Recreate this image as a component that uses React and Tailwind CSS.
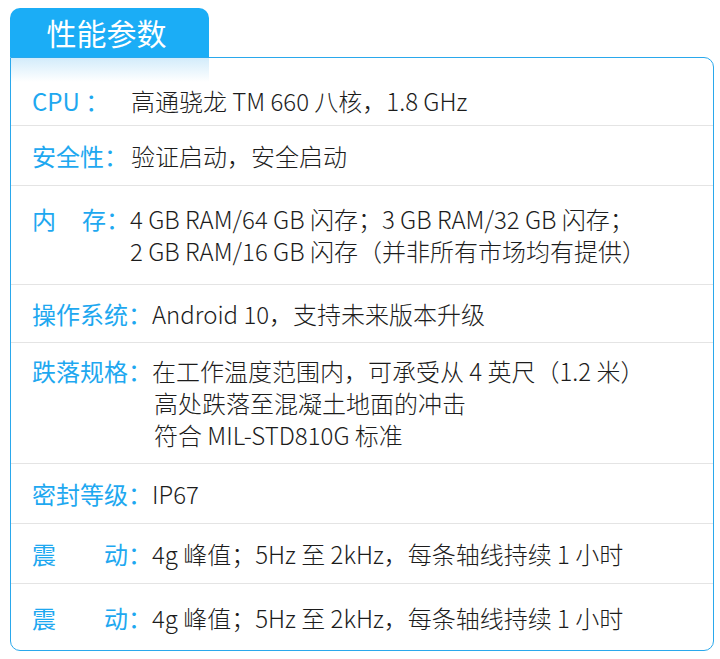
const rows = [
  { label: "CPU ：", labelW: "w-[99px]", h: "h-[68px] pt-[17px]", lines: ["高通骁龙 TM 660 八核，1.8 GHz"] },
  { label: "安全性：", labelW: "w-[99px]", h: "h-[60px]", lines: ["验证启动，安全启动"] },
  {
    split: ["内", "存："],
    labelW: "w-[98px]",
    h: "h-[99px]",
    lines: ["4 GB RAM/64 GB 闪存；3 GB RAM/32 GB 闪存；", "2 GB RAM/16 GB 闪存（并非所有市场均有提供）"],
    leading: "leading-[32px]",
  },
  { label: "操作系统：", labelW: "w-[120px]", h: "h-[58px]", lines: ["Android 10，支持未来版本升级"] },
  {
    label: "跌落规格：",
    labelW: "w-[120px]",
    h: "h-[121px]",
    lines: ["在工作温度范围内，可承受从 4 英尺（1.2 米）", "高处跌落至混凝土地面的冲击", "符合 MIL-STD810G 标准"],
    leading: "leading-[32px]",
    indent: true,
  },
  { label: "密封等级：", labelW: "w-[120px]", h: "h-[60px]", lines: ["IP67"] },
  { split: ["震", "动："], labelW: "w-[120px]", h: "h-[60px]", lines: ["4g 峰值；5Hz 至 2kHz，每条轴线持续 1 小时"] },
  { split: ["震", "动："], labelW: "w-[120px]", h: "h-[66px]", lines: ["4g 峰值；5Hz 至 2kHz，每条轴线持续 1 小时"], last: true },
];

const App = () => {
  return (
    <div
      className="min-h-screen bg-white pt-[8px] pl-[10px]"
      style={{ fontFamily: '"Noto Sans CJK SC", "Noto Sans", sans-serif' }}
    >
      <div className="w-[704px]">
        <div className="w-[199px] h-[49px] rounded-t-[10px] bg-[#1badf6] flex items-center justify-center text-white text-[30px] pr-[6px]">
          性能参数
        </div>

        <div className="relative border border-[#2aa8ec] rounded-tr-[10px] rounded-b-[10px] bg-white">
          <div className="absolute left-0 top-0 w-[198px] h-[24px] bg-gradient-to-b from-[#d3ecfb] to-white/0"></div>

          {rows.map((row, i) => (
            <div
              key={i}
              className={`relative flex items-center pl-[21px] ${row.h} ${row.last ? "" : "border-b border-[#e4e4e4]"}`}
            >
              <div className={`flex items-start text-[24px] ${row.leading || "leading-[31px]"}`}>
                <div className={`${row.labelW} shrink-0 text-[#1ea8f0]`}>
                  {row.split ? (
                    <div className="flex justify-between">
                      <span>{row.split[0]}</span>
                      <span>{row.split[1]}</span>
                    </div>
                  ) : (
                    <span>{row.label}</span>
                  )}
                </div>
                <div className="text-[#1c1c1c] font-light">
                  {row.lines.map((l, j) => (
                    <div key={j} className={row.indent && j > 0 ? "pl-[2px]" : ""}>
                      {l}
                    </div>
                  ))}
                </div>
              </div>
            </div>
          ))}
        </div>
      </div>
    </div>
  );
};

export default App;
